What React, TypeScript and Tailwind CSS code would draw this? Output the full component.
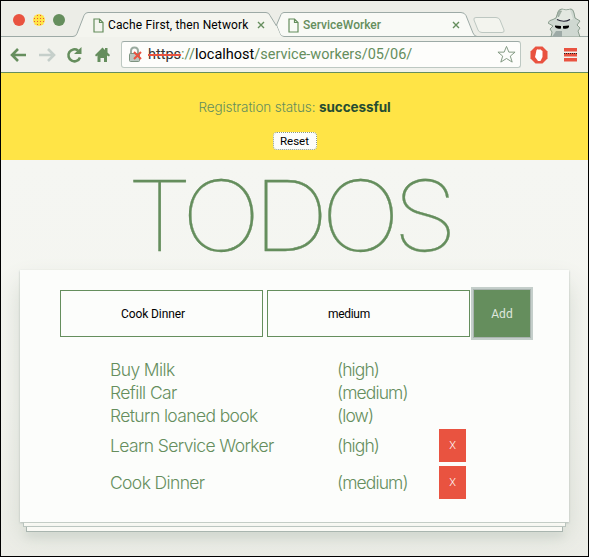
import React from "react";

const todos = [
  { name: "Buy Milk", priority: "high", removable: false },
  { name: "Refill Car", priority: "medium", removable: false },
  { name: "Return loaned book", priority: "low", removable: false },
  { name: "Learn Service Worker", priority: "high", removable: true },
  { name: "Cook Dinner", priority: "medium", removable: true },
];

function PageIcon() {
  return (
    <svg width="11" height="15" viewBox="0 0 11 15" fill="none" stroke="#658e5d" strokeWidth="1.2" className="shrink-0">
      <path d="M1 1h5.5L10 4.500V14H1zM6.500 1v3.500H10" />
    </svg>
  );
}

function CloseIcon() {
  return (
    <svg width="8" height="8" viewBox="0 0 8 8" stroke="#658e5d" strokeWidth="1.4" className="shrink-0">
      <path d="M1 1l6 6M7 1L1 7" />
    </svg>
  );
}

function TabStrip() {
  return (
    <div className="relative h-9 w-full shrink-0">
      <svg className="absolute left-0 top-0" width="587" height="36" viewBox="1 1 587 36" fill="none">
        <path d="M275 36.500L280 15q1-2.500 4-2.500H461q3.500 0 5 3L475 36.500z" fill="#f9faf6" />
        <path d="M276.500 25L281 14.500q1-2 3-2H461q3.500 0 5 3L473 33q1.500 3.500 4 3.500M276.500 25L280 34q1 2.500 4 2.500H588" stroke="#9daaa6" />
        <path d="M74 37q2 0 3-3L84 15.500q1.200-3 4-3H266q3 0 4 3L276.500 26 280 34q1 3 4 3z" fill="#f4f5ef" />
        <path d="M1 36.500H73q3 0 4-3L84 15.500q1.200-3 4-3H266q3 0 4 3L276.500 26" stroke="#9daaa6" />
        <path d="M476 17.500h20q3 0 4 2.500l4 10q.8 2.500-2 2.500H482q-3 0-4-2.500l-4-10q-.8-2.500 2-2.500z" fill="#f3f4ee" stroke="#bdc7c1" />
      </svg>
      <div className="relative flex h-9 items-center pt-3 font-['Roboto','Liberation_Sans',sans-serif] text-[12px]">
        <div className="-mt-2.5 ml-3 flex w-[78px] gap-2">
          <span className="size-3 rounded-full bg-[#e95340]" />
          <span className="size-3 rounded-full bg-[radial-gradient(circle,#e95340_0.6px,#ffe446_0.9px)] bg-[length:3px_3px]" />
          <span className="size-3 rounded-full bg-[#658e5d]" />
        </div>
        <div className="flex w-[194px] items-center">
          <span className="ml-[2px]"><PageIcon /></span>
          <span className="ml-[4px] w-[147px] whitespace-nowrap tracking-[0.14px] text-black">Cache First, then Network</span>
          <span className="ml-[2px]"><CloseIcon /></span>
        </div>
        <div className="flex w-[180px] items-center">
          <span className="ml-[3px]"><PageIcon /></span>
          <span className="ml-[4px] w-[149px] font-medium text-[#658e5d]">ServiceWorker</span>
          <span><CloseIcon /></span>
        </div>
      </div>
      <svg className="absolute right-[6px] top-[7px]" width="34" height="29" viewBox="0 0 34 29">
        <path d="M3 29l1-5-2-3 3-3-5-3q1-3 5-3.500L8 10l2-6q1-3 4-3l4 1 5-1q2 0 3 4l1 5 5 3-3 4 3 3-2 3 2 6z" fill="#cfd8d1" stroke="#8a9d8e" />
        <path d="M9 11l3-8 3-1.500 3 1 4-1 3 9.500-6 3h-5z" fill="#e3e8e1" />
        <path d="M10.500 3q-2 4 0 6l3-6z" fill="#a9b5ae" stroke="#8da08f" strokeWidth=".6" />
        <path d="M9 11.500q7 3.500 13 0" stroke="#223" fill="none" strokeWidth="1.200" />
        <path d="M7 17.500l6 .5v2.500q-4 1-6-1.500zM21 17.500l-6 .5v2.500q5 1 6-1.500z" fill="#000" />
        <path d="M4 29l4-6h6v6z" fill="#9daaa6" />
      </svg>
    </div>
  );
}

function Toolbar() {
  return (
    <div className="flex h-9 w-full shrink-0 items-center border-b border-[#658e5d] bg-[#f1f2ec]">
      <svg className="ml-2" width="112" height="20" viewBox="0 0 112 20" fill="none">
        <g strokeWidth="2.600">
          <path d="M17 10H4M9 4l-6 6 6 6" stroke="#658e5d" />
          <path d="M30 10h13M39 4l6 6-6 6" stroke="#c5cfca" />
          <path d="M71 12.500A6 6 0 1 1 69 5.500" stroke="#658e5d" />
        </g>
        <path d="M72.500 2v7H65z" fill="#658e5d" />
        <path d="M86 10l7.500-7.500L96 5V3h2.500v4.500L101 10l-1 1.500-2-1V17h-3v-4h-3.500v4h-3v-6.500l-1.500 1z" fill="#658e5d" />
      </svg>
      <div className="flex h-[27px] w-[400px] items-center rounded-[3px] border border-[#bdc8c2] border-t-[#9daaa6] bg-[#fdfdfb]">
        <svg className="ml-[6px] shrink-0" width="16" height="18" viewBox="0 0 16 18" fill="none">
          <path d="M3 8V5q0-3.500 3.500-3.500T10 5v3" stroke="#9aaa9f" strokeWidth="2" />
          <rect x="1.500" y="7.500" width="10" height="8" rx="1" fill="#bcc8c1" stroke="#7d9380" />
          <path d="M6 6l7 7M13 6l-7 7" stroke="#e95340" strokeWidth="2" />
        </svg>
        <span className="ml-[4px] w-[350px] whitespace-nowrap font-['Roboto','Liberation_Sans',sans-serif] text-[14.500px] text-[#658e5d]">
          <span className="text-[#333] line-through decoration-[#e95340] decoration-[1.5px]">https</span>://<span className="text-black">localhost</span>/service-workers/05/06/
        </span>
        <svg width="19" height="19" viewBox="0 0 20 20" fill="#fdfdfb" stroke="#7e967e" className="-ml-[1px] shrink-0">
          <path d="M10 1.500l2.500 6h6.500l-5 4.200 2 6.300-6-3.800L4 18l2-6.300L1 7.500h6.500z" />
        </svg>
      </div>
      <svg className="ml-[9px]" width="18" height="18" viewBox="0 0 18 18">
        <path d="M5.500 .5h7l5 5v7l-5 5h-7l-5-5v-7z" fill="#e95340" />
        <path d="M5.500 9l1-5 1.500-1 1 1 1-1 1 1 1.500 1v6l-2 4H8l-3-4z" fill="#fff" />
      </svg>
      <svg className="ml-[16px]" width="14" height="14" viewBox="0 0 14 14">
        <path d="M0 0h13v3.500H0zM0 5h13v3.500H0zM0 10h13v3.500H0z" fill="#e95340" />
        <path d="M0 5.500h13" stroke="#222" strokeDasharray="1 1" />
      </svg>
    </div>
  );
}

function TodoCard() {
  return (
    <div className="px-[19px]">
      <div className="h-[252px] bg-[#fcfdfb] pt-5 shadow-[0_1px_2px_#b4beb9,0_14px_24px_#d3d8cf]">
        <form className="ml-10 flex font-['Roboto','Liberation_Sans',sans-serif] text-[12px]" onSubmit={(e) => e.preventDefault()}>
          <input className="h-[47px] w-[203px] border border-[#658e5d] bg-transparent px-[60px] tracking-[-0.1px] text-black outline-none" defaultValue="Cook Dinner" />
          <input className="ml-1 h-[47px] w-[203px] border border-[#658e5d] bg-transparent px-[60px] tracking-[-0.3px] text-black outline-none" defaultValue="medium" />
          <button className="ml-[4px] h-[47px] w-[56px] bg-[#658e5d] tracking-[0.1px] text-[#dfe7dd] shadow-[0_0_0_1px_#a9b4af,0_0_0_3px_#c4ceca]">Add</button>
        </form>
        <ul className="ml-[90px] mt-[22px] font-['Inter','Liberation_Sans',sans-serif] text-[17.500px] font-light text-[#658e5d]">
          {todos.map((todo) => (
            <li key={todo.name} className={todo.removable ? "flex h-[37px] items-center" : "flex h-[23px] items-center"}>
              <span className="w-[227px] tracking-[-0.62px]">{todo.name}</span>
              <span className="w-[102px] tracking-[-0.9px]">({todo.priority})</span>
              {todo.removable && <button className="-mt-0.5 h-[33px] w-[27px] bg-[#e95340] pt-[1px] font-['Roboto','Liberation_Sans',sans-serif] text-[11px] font-light text-white">X</button>}
            </li>
          ))}
        </ul>
      </div>
      <div className="mx-[3px] h-[5px] border border-t-[#c5cdc7] border-[#b9c4be] bg-[#fafaf5]" />
      <div className="mx-[6px] h-[5px] border border-t-0 border-[#a9b5af] bg-[#fafaf5] shadow-[0_4px_8px_#cbd2ca]" />
    </div>
  );
}

export default function App() {
  return (
    <div className="flex h-[557px] w-[589px] flex-col overflow-hidden border border-black bg-[#ecede7]">
      <TabStrip />
      <Toolbar />
      <header className="flex h-[87px] shrink-0 flex-col items-center bg-[#ffe446] pt-6 text-[#658e5d]">
        <p className="whitespace-nowrap font-['Inter','Liberation_Sans',sans-serif] text-[13.500px] font-light leading-5 tracking-[-0.1px]">
          Registration status: <strong className="font-bold text-[#254c32]">successful</strong>
        </p>
        <button className="mt-[15px] h-[18px] w-11 rounded-[4px] border border-dotted border-[#8c9c83] bg-[#fdfdfb] font-['Roboto','Liberation_Sans',sans-serif] text-[11.500px] leading-4 text-black">Reset</button>
      </header>
      <main className="min-h-0 flex-1 bg-[linear-gradient(#f5f6f2,#f4f5f0_60%,#ecede7)]">
        <h1 className="flex h-[110px] items-center justify-center font-['Inter','Liberation_Sans',sans-serif] text-[98px] font-thin leading-[109px] tracking-[-7.5px] text-[#658e5d]">
          <span className="mr-[13px] scale-x-[1.09] [-webkit-text-stroke:0.3px_#658e5d]">TODOS</span>
        </h1>
        <TodoCard />
      </main>
    </div>
  );
}
